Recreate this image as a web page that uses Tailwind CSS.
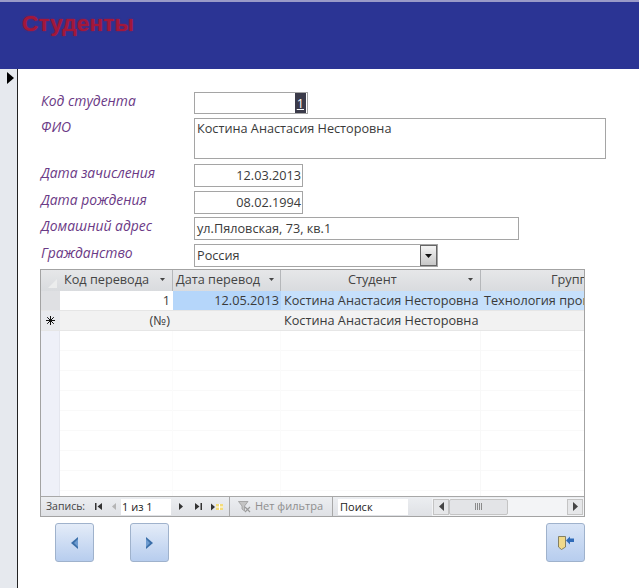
<!DOCTYPE html>
<html><head><meta charset="utf-8"><script src="https://cdn.jsdelivr.net/npm/@tailwindcss/browser@4"></script></head>
<body class="bg-white">
<div class="w-[639px] h-[588px] overflow-hidden bg-white font-['Open_Sans',sans-serif] text-[12.7px] text-[#3a3a3a]">
  <div class="h-[2px] bg-[#9a9ac8]"></div>
  <header class="h-[67px] bg-[#2b3494] pl-[22px] pt-[7px]">
    <h1 class="text-[22.8px] leading-[28px] font-bold text-[#a3173a] font-['Liberation_Sans',sans-serif] [text-shadow:0_0_2px_#8d1a4e]">Студенты</h1>
  </header>
  <div class="flex h-[519px]">
    <div class="w-[18px] shrink-0 bg-[#e6e9ee] border-r border-[#222] pt-[3px] pl-[7px]">
      <svg class="block" width="7" height="12" viewBox="0 0 7 12"><path d="M0 0 L7 6 L0 12Z" fill="#000"/></svg>
    </div>
    <main class="pl-[22px] flex-1 min-w-0 pt-[23px]">
      <div class="grid grid-cols-[154px_1fr] grid-rows-[26px_46px_27px_26px_27px_25px]">
        <div class="italic text-[13.9px] leading-[18px] text-[#6b3a86] pl-[1px]">Код студента</div>
        <div><div class="w-[114px] h-[22px] border border-[#a5a5a5] flex justify-end pr-[1px]"><span class="bg-[#3b3b4a] text-white px-[2px] leading-[20px] underline">1</span></div></div>
        <div class="italic text-[13.9px] leading-[18px] text-[#6b3a86] pl-[1px]">ФИО</div>
        <div><div class="w-[412px] h-[41px] border border-[#a5a5a5] px-[2px] leading-[18px]">Костина Анастасия Несторовна</div></div>
        <div class="italic text-[13.9px] leading-[18px] text-[#6b3a86] pl-[1px]">Дата зачисления</div>
        <div><div class="w-[109px] h-[23px] border border-[#a5a5a5] text-right pr-[1px] leading-[21px]">12.03.2013</div></div>
        <div class="italic text-[13.9px] leading-[18px] text-[#6b3a86] pl-[1px]">Дата рождения</div>
        <div><div class="w-[109px] h-[23px] border border-[#a5a5a5] text-right pr-[1px] leading-[21px]">08.02.1994</div></div>
        <div class="italic text-[13.9px] leading-[18px] text-[#6b3a86] pl-[1px]">Домашний адрес</div>
        <div><div class="w-[325px] h-[23px] border border-[#a5a5a5] px-[2px] leading-[21px]">ул.Пяловская, 73, кв.1</div></div>
        <div class="italic text-[13.9px] leading-[18px] text-[#6b3a86] pl-[1px]">Гражданство</div>
        <div><div class="w-[244px] h-[23px] border border-[#a5a5a5] pl-[2px] leading-[20px] flex justify-between">
          <span>Россия</span>
          <span class="w-[17px] h-[21px] border border-[#666] bg-gradient-to-b from-[#f4f4f4] to-[#c8c8c8] flex items-center justify-center"><svg width="7" height="4" viewBox="0 0 7 4"><path d="M0 0H7L3.5 4Z" fill="#111"/></svg></span>
        </div></div>
      </div>

      <section class="w-[545px] h-[248px] border border-[#a3a3a3] flex flex-col overflow-hidden">
        <div class="flex h-[21px] shrink-0 bg-gradient-to-b from-[#e6e7e9] to-[#d9dbde] leading-[19px] text-[#444]">
          <div class="w-[19px] shrink-0 flex items-end justify-end p-[3px]"><svg width="9" height="9" viewBox="0 0 9 9"><path d="M9 0V9H0Z" fill="#eceded"/></svg></div>
          <div class="w-[113px] shrink-0 border-r border-[#b5b7ba] pl-[4px] pb-[2px] flex items-center justify-between pr-[7px]"><span>Код перевода</span><svg width="5" height="3" viewBox="0 0 5 3"><path d="M0 0H5L2.500 3Z" fill="#444"/></svg></div>
          <div class="w-[108px] shrink-0 border-r border-[#b5b7ba] pl-[3px] pb-[2px] flex items-center justify-between pr-[6px]"><span>Дата перевод</span><svg width="5" height="3" viewBox="0 0 5 3"><path d="M0 0H5L2.500 3Z" fill="#444"/></svg></div>
          <div class="w-[200px] shrink-0 border-r border-[#b5b7ba] flex items-center pl-[67px] pb-[2px] pr-[7px] justify-between"><span>Студент</span><svg width="5" height="3" viewBox="0 0 5 3"><path d="M0 0H5L2.500 3Z" fill="#444"/></svg></div>
          <div class="flex-1 min-w-0 overflow-hidden whitespace-nowrap pl-[70px]">Группа</div>
        </div>
        <div class="flex h-[20px] shrink-0 leading-[19px] border-b border-[#e6e6e6]">
          <div class="w-[19px] shrink-0 bg-[#dfe0e3]"></div>
          <div class="w-[113px] shrink-0 bg-white text-right pr-[3px]">1</div>
          <div class="w-[108px] shrink-0 bg-[#b5d6fa] text-right pr-[2px]">12.05.2013</div>
          <div class="w-[200px] shrink-0 bg-[#c6e0fb] pl-[3px] whitespace-nowrap">Костина Анастасия Несторовна</div>
          <div class="flex-1 min-w-0 overflow-hidden bg-[#c6e0fb] pl-[3px] whitespace-nowrap">Технология производства</div>
        </div>
        <div class="flex h-[20px] shrink-0 leading-[19px] bg-[#f2f2f2] border-b border-[#e6e6e6]">
          <div class="w-[19px] shrink-0 bg-[#e8eaee] flex items-center justify-center"><svg width="9" height="9" viewBox="0 0 9 9" stroke="#111" stroke-width="1"><path d="M4.500 0V9M0 4.500H9M1.200 1.200L7.800 7.800M7.800 1.200L1.200 7.800"/></svg></div>
          <div class="w-[113px] shrink-0 text-right pr-[3px]">(№)</div>
          <div class="w-[108px] shrink-0"></div>
          <div class="w-[200px] shrink-0 pl-[3px] whitespace-nowrap">Костина Анастасия Несторовна</div>
          <div class="flex-1"></div>
        </div>
        <div class="flex-1 min-h-0 flex bg-[repeating-linear-gradient(to_bottom,#fff_0,#fff_19px,#f9f9f9_19px,#f9f9f9_20px)]">
          <div class="w-[19px] shrink-0 bg-[#eef0f8] border-r border-[#e4e6ee]"></div>
          <div class="w-[113px] shrink-0 border-r border-[#fbfbfb]"></div>
          <div class="w-[108px] shrink-0 border-r border-[#fbfbfb]"></div>
          <div class="w-[200px] shrink-0 border-r border-[#f8f8f8]"></div>
        </div>
        <div class="h-[20px] shrink-0 flex items-center border-t border-[#a8a8a8] bg-gradient-to-b from-[#eceef1] to-[#dfe1e5] text-[10.5px] text-[#444]">
          <span class="w-[50px] shrink-0 pl-[5px]">Запись:</span>
          <span class="w-[15px] shrink-0 flex justify-center"><svg width="7" height="7" viewBox="0 0 7 7" fill="#333"><path d="M0 0H1.500V7H0ZM7 0V7L2.500 3.500Z"/></svg></span>
          <span class="w-[15px] shrink-0 flex justify-center"><svg width="4" height="7" viewBox="0 0 4 7" fill="#b5b5b5"><path d="M4 0V7L0 3.500Z"/></svg></span>
          <span class="w-[50px] h-[16px] shrink-0 bg-white leading-[16px] text-[#222] pl-[1px] text-[11px]">1 из 1</span>
          <span class="w-[20px] shrink-0 flex justify-center"><svg width="4" height="7" viewBox="0 0 4 7" fill="#333"><path d="M0 0V7L4 3.500Z"/></svg></span>
          <span class="w-[15px] shrink-0 flex justify-center"><svg width="7" height="7" viewBox="0 0 7 7" fill="#333"><path d="M0 0V7L4.500 3.500ZM5.500 0H7V7H5.500Z"/></svg></span>
          <span class="w-[23px] shrink-0 flex justify-center"><svg width="13" height="8" viewBox="0 0 13 8"><path d="M0 0.500V7.500L4 4Z" fill="#333"/><path d="M5 1H12V7H5Z" fill="#f4dc7a"/><path d="M8.500 1V7M5 4H12" stroke="#fff" stroke-width="1"/></svg></span>
          <span class="h-full w-[104px] shrink-0 border-l border-r border-[#a8a8a8] flex items-center pl-[8px] gap-[4px] text-[#8e8e8e] text-[11px]">
            <svg class="shrink-0" width="13" height="12" viewBox="0 0 13 12"><path d="M0.500 0.500H10L6.500 5V10L4 8V5Z" fill="#c4c4c4" stroke="#9a9a9a" stroke-width="0.800"/><path d="M7 6L12 11M12 6L7 11" stroke="#9a9a9a" stroke-width="1.200"/></svg>
            <span class="whitespace-nowrap">Нет фильтра</span></span>
          <span class="pl-[5px] w-[99px] shrink-0 flex"><span class="w-[70px] h-[16px] bg-white leading-[16px] text-[#222] pl-[2px] text-[11px]">Поиск</span></span>
          <span class="flex-1 min-w-0 h-[18px] flex items-center bg-[#f3f4f6]">
            <span class="w-[16px] h-[16px] shrink-0 ml-[1px] border border-[#c4c4c4] bg-[#e6e7e9] flex items-center justify-center"><svg width="5" height="9" viewBox="0 0 5 9" fill="#444"><path d="M5 0V9L0 4.500Z"/></svg></span>
            <span class="w-[59px] h-[16px] shrink-0 border border-[#c4c4c4] rounded-[2px] bg-[#e3e4e7] flex items-center justify-center"><svg width="7" height="7" viewBox="0 0 7 7" stroke="#8a8a8a" stroke-width="1"><path d="M0.500 0V7M2.500 0V7M4.500 0V7M6.500 0V7"/></svg></span>
            <span class="flex-1"></span>
            <span class="w-[16px] h-[16px] shrink-0 mr-[1px] border border-[#c4c4c4] bg-[#e6e7e9] flex items-center justify-center"><svg width="5" height="9" viewBox="0 0 5 9" fill="#444"><path d="M0 0V9L5 4.500Z"/></svg></span>
          </span>
        </div>
      </section>

      <div class="w-[545px] pl-[15px] mt-[6px] flex">
        <button class="w-[39px] h-[39px] rounded-[3px] border border-[#9fb2cc] bg-gradient-to-b from-[#e4ecf8] to-[#b7cdee] flex items-center justify-center"><svg width="7" height="12" viewBox="0 0 7 12"><path d="M7 0V12L0 6Z" fill="#3a6ea8"/><path d="M7 2V10L3 6Z" fill="#6d9bd0"/></svg></button>
        <button class="ml-[36px] w-[39px] h-[39px] rounded-[3px] border border-[#9fb2cc] bg-gradient-to-b from-[#e4ecf8] to-[#b7cdee] flex items-center justify-center"><svg width="7" height="12" viewBox="0 0 7 12"><path d="M0 0V12L7 6Z" fill="#3a6ea8"/><path d="M0 2V10L4 6Z" fill="#6d9bd0"/></svg></button>
        <button class="ml-auto w-[39px] h-[39px] rounded-[3px] border border-[#9fb2cc] bg-gradient-to-b from-[#d8e4f6] to-[#b7cdee] flex items-center justify-center"><svg width="16" height="14" viewBox="0 0 16 14"><path d="M0.500 0.500H7.500V11L3.500 13.500L0.500 11Z" fill="#f0d98a" stroke="#6f6a4a" stroke-width="0.800"/><path d="M8 4.500L12 0.500V2.500H16V6H12V8.500Z" fill="#2f6bb8"/></svg></button>
      </div>
    </main>
  </div>
</div>
</body></html>
